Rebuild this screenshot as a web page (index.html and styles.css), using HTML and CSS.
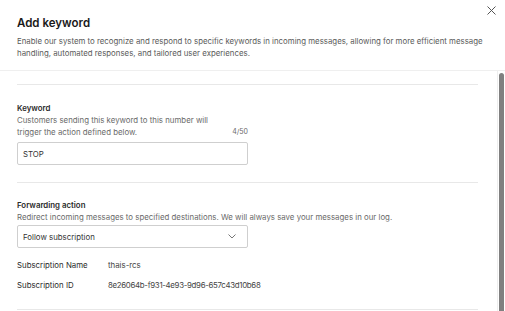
FILE: index.html
```html
<!DOCTYPE html>
<html>
<head>
<meta charset="utf-8">
<link rel="stylesheet" href="styles.css">
</head>
<body>
<div class="modal">
  <header class="head">
    <h1 class="title">Add keyword</h1>
    <p class="intro">Enable our system to recognize and respond to specific keywords in incoming messages, allowing for more efficient message handling, automated responses, and tailored user experiences.</p>
    <button class="close" aria-label="Close">
      <svg width="9" height="9" viewBox="0 0 9 9"><path d="M0.5 0.5L8.5 8.5M8.5 0.5L0.5 8.5" stroke="#555" stroke-width="1"/></svg>
    </button>
  </header>
  <div class="bodywrap">
    <div class="content">
      <hr class="rule">
      <section class="field">
        <div class="label">Keyword</div>
        <div class="help-row">
          <p class="help">Customers sending this keyword to this number will trigger the action defined below.</p>
          <span class="count">4/50</span>
        </div>
        <div class="input">STOP</div>
      </section>
      <hr class="rule">
      <section class="field second">
        <div class="label">Forwarding action</div>
        <p class="help wide">Redirect incoming messages to specified destinations. We will always save your messages in our log.</p>
        <div class="input select">
          <span>Follow subscription</span>
          <svg width="8" height="5" viewBox="0 0 8 5"><path d="M0.5 0.5L4 4L7.5 0.5" fill="none" stroke="#777" stroke-width="1"/></svg>
        </div>
        <dl class="info">
          <dt>Subscription Name</dt><dd>thais-rcs</dd>
          <dt>Subscription ID</dt><dd class="mono">8e26064b-f931-4e93-9d96-657c43d10b68</dd>
        </dl>
      </section>
      <hr class="rule">
    </div>
    <div class="scrollbar"><div class="thumb"></div></div>
  </div>
</div>
</body>
</html>
```
FILE: styles.css
```css
* { box-sizing: border-box; }
html, body { margin: 0; padding: 0; background: #fff; }
body {
  font-family: Inter, "Noto Sans", sans-serif;
  color: #222;
  width: 505px;
  height: 311px;
  overflow: hidden;
}
.modal {
  width: 505px;
  height: 311px;
  display: flex;
  flex-direction: column;
}
.head {
  position: relative;
  padding: 15px 14px 0 17px;
  height: 71px;
  border-bottom: 1px solid #efefef;
}
.title {
  margin: 0;
  font-size: 11.5px;
  font-weight: 600;
  line-height: 16px;
  color: #1a1a1a;
}
.intro {
  margin: 4px 0 0;
  font-size: 7.85px;
  line-height: 12px;
  color: #5a5a5a;
}
.close {
  position: absolute;
  right: 9px;
  top: 6px;
  border: 0;
  background: none;
  padding: 0;
  width: 9px;
  height: 9px;
  display: flex;
}
.bodywrap {
  flex: 1;
  display: flex;
  min-height: 0;
}
.content {
  flex: 1;
  padding: 13px 19px 0 17px;
}
.rule {
  border: 0;
  border-top: 1px solid #e8e8e8;
  margin: 0;
}
.field {
  padding: 17px 0 17px;
}
.field.second {
  padding: 16px 0 18px;
}
.label {
  font-size: 7.85px;
  font-weight: 600;
  color: #2a2a2a;
  line-height: 12px;
}
.help-row {
  display: flex;
  align-items: flex-end;
  width: 231px;
  justify-content: space-between;
}
.help {
  margin: 0;
  font-size: 7.85px;
  line-height: 12px;
  color: #6a6a6a;
  width: 212px;
}
.help.wide { width: auto; }
.count {
  font-size: 7px;
  color: #6a6a6a;
  line-height: 12px;
}
.input {
  margin-top: 4px;
  width: 231px;
  height: 23px;
  border: 1px solid #cfcfcf;
  border-radius: 2px;
  font-size: 7.85px;
  color: #333;
  padding: 0 8px 0 5px;
  display: flex;
  align-items: center;
}
.select {
  justify-content: space-between;
  margin-top: 2px;
}
.select svg { margin-right: 3px; }
.info {
  margin: 11px 0 0;
  display: grid;
  grid-template-columns: 91px 1fr;
  row-gap: 8px;
  font-size: 7.85px;
  line-height: 12px;
}
.info dt { color: #2a2a2a; }
.info dd { margin: 0; color: #444; }
.info .mono { letter-spacing: -0.3px; }
.scrollbar {
  width: 8px;
  border-left: 1px solid #eee;
  padding: 2px 1px 0 1px;
}
.thumb {
  width: 5px;
  height: 100%;
  background: #808080;
  border-radius: 3px 3px 0 0;
}
```
